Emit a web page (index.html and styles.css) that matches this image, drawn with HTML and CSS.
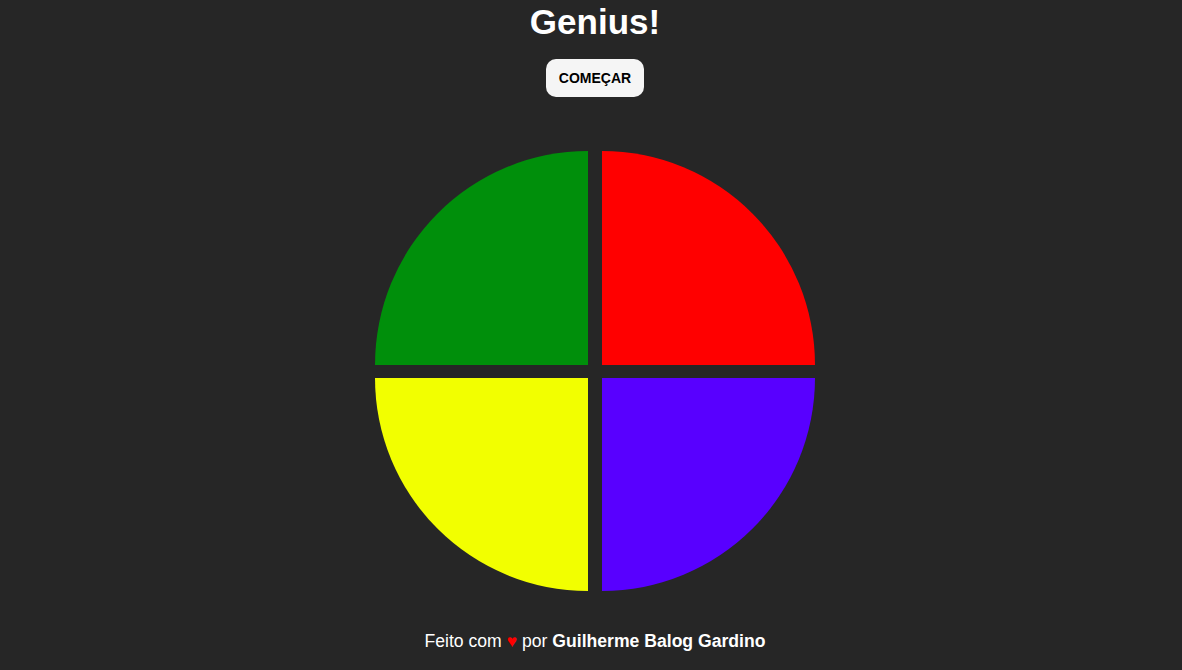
FILE: index.html
```html
<!DOCTYPE html>
<html lang="pt-BR">
<head>
<meta charset="utf-8">
<title>Genius!</title>
<link rel="stylesheet" href="styles.css">
</head>
<body>
<main class="app">
  <h1 class="title">Genius!</h1>
  <button class="start">COMEÇAR</button>
  <div class="board">
    <div class="pad pad-green"></div>
    <div class="pad pad-red"></div>
    <div class="pad pad-yellow"></div>
    <div class="pad pad-purple"></div>
  </div>
  <footer class="credits">Feito com <span class="heart">♥</span> por <strong>Guilherme Balog Gardino</strong></footer>
</main>
</body>
</html>
```
FILE: styles.css
```css
html, body {
  margin: 0;
  padding: 0;
  background: #262626;
  height: 100%;
}
body {
  padding-left: 8px;
  font-family: "Liberation Sans", Arial, sans-serif;
  color: #ffffff;
  overflow: hidden;
}
.app {
  display: flex;
  flex-direction: column;
  align-items: center;
}
.title {
  margin: 2px 0 0;
  font-size: 35px;
  line-height: 40px;
  font-weight: bold;
}
.start {
  margin-top: 17px;
  height: 38px;
  padding: 0 13px;
  border: none;
  border-radius: 10px;
  background: #f5f5f5;
  color: #000;
  font-family: "Liberation Sans", Arial, sans-serif;
  font-weight: bold;
  font-size: 14px;
}
.board {
  margin-top: 54px;
  display: grid;
  grid-template-columns: 213px 213px;
  grid-template-rows: 214px 213px;
  column-gap: 14px;
  row-gap: 13px;
}
.pad-green {
  background: #008f0b;
  border-top-left-radius: 100%;
}
.pad-red {
  background: #ff0000;
  border-top-right-radius: 100%;
}
.pad-yellow {
  background: #f2ff00;
  border-bottom-left-radius: 100%;
}
.pad-purple {
  background: #5800ff;
  border-bottom-right-radius: 100%;
}
.credits {
  margin-top: 40px;
  font-size: 17.6px;
}
.heart {
  color: #ff0000;
}
```
